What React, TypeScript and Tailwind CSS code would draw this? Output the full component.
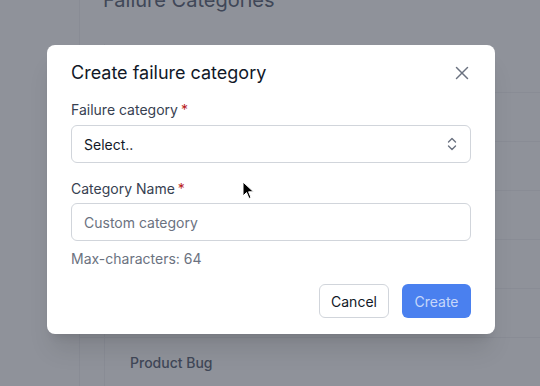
import React from "react";

function ChevronUpDown() {
  return (
    <svg width="14" height="16" viewBox="0 0 14 16" fill="none" stroke="#6b7280" strokeWidth="1.4" strokeLinecap="round" strokeLinejoin="round">
      <path d="M3.5 6 L7 2.5 L10.5 6" />
      <path d="M3.5 10 L7 13.5 L10.5 10" />
    </svg>
  );
}

function CloseIcon() {
  return (
    <svg width="14" height="14" viewBox="0 0 14 14" fill="none" stroke="#6b7280" strokeWidth="1.5" strokeLinecap="round">
      <path d="M1.5 1.5 L12.5 12.5" />
      <path d="M12.5 1.5 L1.5 12.5" />
    </svg>
  );
}

function Cursor() {
  return (
    <svg width="14" height="20" viewBox="0 0 14 20">
      <path d="M1 1 L1 15 L4.5 11.5 L7 17.5 L9 16.6 L6.6 10.8 L11.5 10.8 Z" fill="#000" stroke="#fff" strokeWidth="1" strokeLinejoin="round" />
    </svg>
  );
}

export default function App() {
  const rows = ["", "", "", "", "", "", "Product Bug"];
  return (
    <div
      className="relative w-[540px] h-[386px] overflow-hidden bg-white"
      style={{ fontFamily: "Inter, 'Liberation Sans', sans-serif" }}
    >
      {/* background page */}
      <div className="flex h-full">
        <div className="w-[80px] border-r border-gray-100 shrink-0" />
        <div className="flex-1 flex flex-col">
          <div className="pl-[23px] -mt-[14px] text-[20px] leading-7 font-normal text-gray-500">Failure Categories</div>
          <div className="flex flex-col mt-[30px]">
            {rows.map((r, i) => (
              <div key={i} className="h-[49px] border-b border-gray-100 flex items-center">
                <div className="w-[25px] h-full border-r border-gray-100" />
                <div className="pl-[25px] text-[14px] font-medium text-gray-500">{r}</div>
              </div>
            ))}
          </div>
        </div>
      </div>

      {/* overlay */}
      <div className="absolute inset-0 bg-gray-900/[0.47]" />

      {/* modal */}
      <div className="absolute left-[47px] top-[45px] w-[448px] rounded-lg bg-white shadow-xl px-6 pt-[14px] pb-4">
        <div className="flex items-center justify-between">
          <h2 className="text-[18px] leading-7 font-normal text-[#111827]">Create failure category</h2>
          <button className="w-5 h-5 flex items-center justify-center -mr-[1px]">
            <CloseIcon />
          </button>
        </div>

        <div className="mt-[13px]">
          <label className="block text-[14px] leading-5 text-[#374151]">
            Failure category<span className="text-[#b91c1c] ml-[3px]">*</span>
          </label>
          <div className="mt-[5px] h-[38px] rounded-md border border-[#d1d5db] flex items-center justify-between pl-[12px] pr-[11px]">
            <span className="text-[14px] text-[#111827]">Select..</span>
            <ChevronUpDown />
          </div>
        </div>

        <div className="mt-[16px]">
          <label className="block text-[14px] leading-5 text-[#374151]">
            Category Name<span className="text-[#b91c1c] ml-[3px]">*</span>
          </label>
          <div className="mt-[4px] h-[38px] rounded-md border border-[#d1d5db] flex items-center pl-[12px]">
            <span className="text-[14px] text-[#6b7280]">Custom category</span>
          </div>
          <div className="mt-[8px] text-[14px] leading-5 text-[#6b7280]">Max-characters: 64</div>
        </div>

        <div className="mt-[15px] flex justify-end gap-[13px]">
          <button className="h-[34px] w-[70px] rounded-md border border-[#d1d5db] bg-white text-[14px] text-[#111827]">Cancel</button>
          <button className="h-[34px] w-[69px] rounded-md bg-[#4a80ef] text-[14px] text-white/70">Create</button>
        </div>
      </div>

      <div className="absolute left-[242px] top-[181px]">
        <Cursor />
      </div>
    </div>
  );
}
